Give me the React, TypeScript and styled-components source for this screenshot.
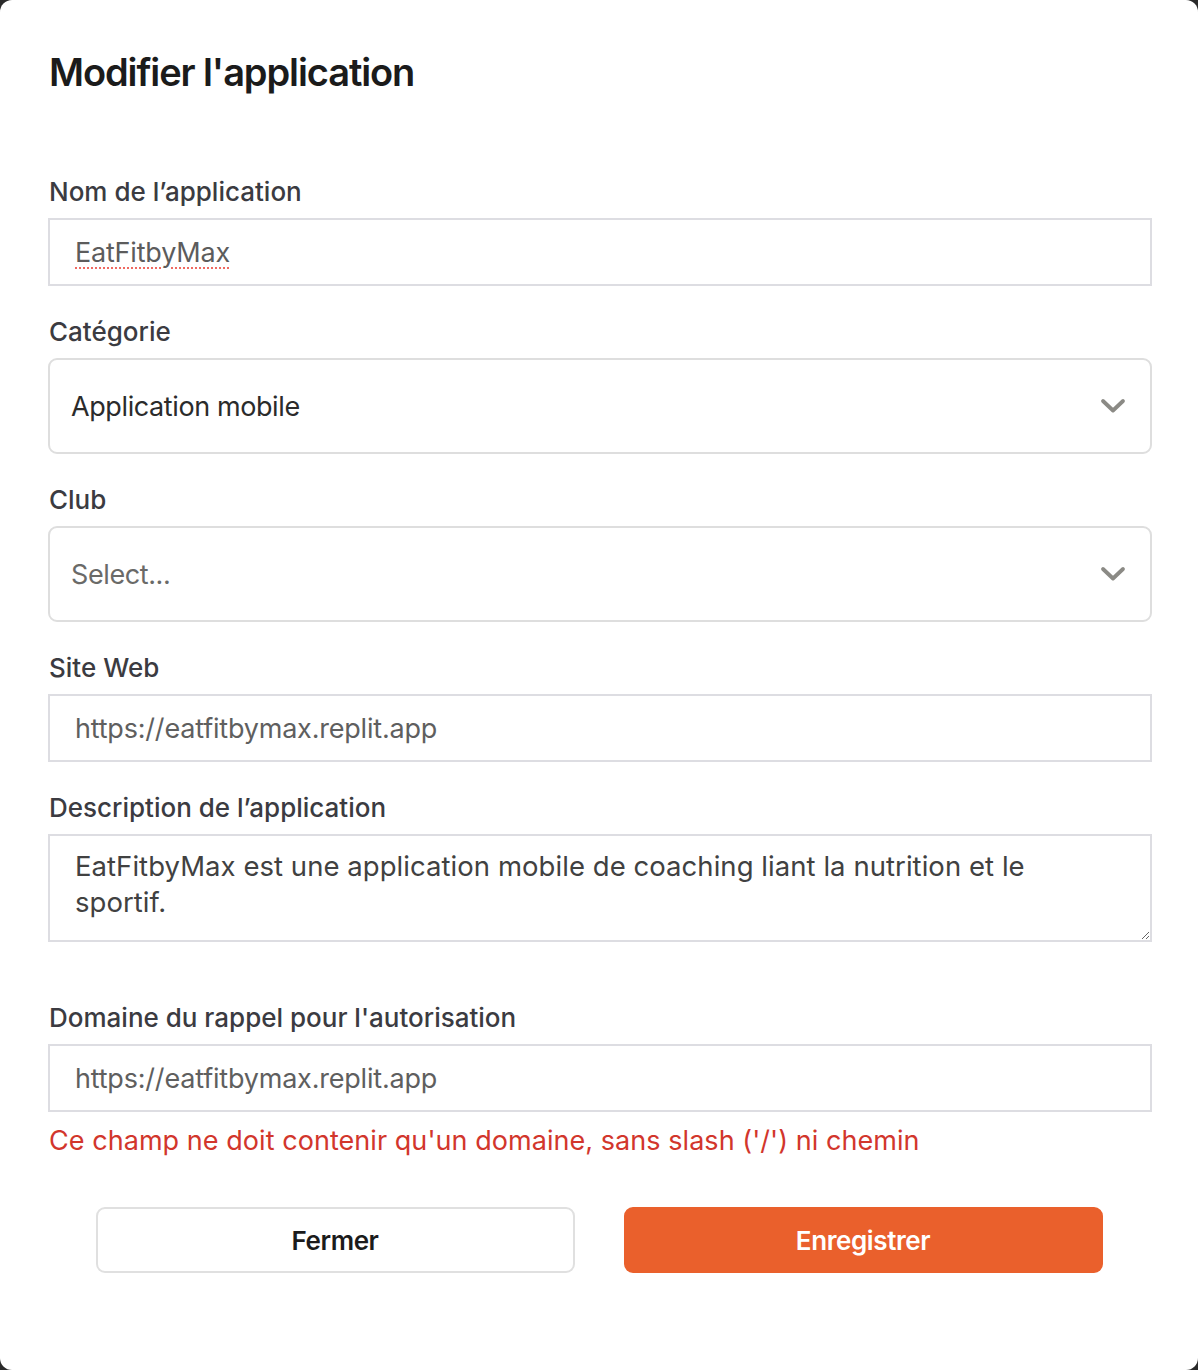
import React from "react";
import styled, { createGlobalStyle } from "styled-components";

const GlobalStyle = createGlobalStyle`
  html, body {
    margin: 0;
    padding: 0;
    background: #2a2a2a;
  }
  * { box-sizing: border-box; }
`;

const FONT = `"Inter", "Liberation Sans", Arial, sans-serif`;

const Modal = styled.div`
  width: 1198px;
  height: 1370px;
  background: #ffffff;
  border-radius: 12px;
  padding: 47px 46px 0 48px;
  font-family: ${FONT};
  display: flex;
  flex-direction: column;
`;

const Title = styled.h1`
  margin: 0 0 0 1px;
  font-size: 38px;
  line-height: 50px;
  font-weight: 600;
  color: #1b1b1b;
  letter-spacing: -1.1px;
`;

const Form = styled.form`
  margin-top: 79px;
  display: flex;
  flex-direction: column;
`;

const Field = styled.div<{ $spaced?: boolean }>`
  display: flex;
  flex-direction: column;
  gap: 10px;
  margin-top: ${(p) => (p.$spaced ? "60px" : "30px")};
  &:first-child {
    margin-top: 0;
  }
`;

const Label = styled.label`
  margin-left: 1px;
  font-size: 26px;
  line-height: 32px;
  font-weight: 500;
  color: #3b3b41;
  letter-spacing: 0;
`;

const TextBox = styled.div`
  height: 68px;
  border: 2px solid #dddde2;
  display: flex;
  align-items: center;
  padding: 0 25px;
  font-size: 27px;
  color: #5c5c5c;
  letter-spacing: -0.2px;
`;

const Misspelled = styled.span`
  text-decoration: underline dotted #ef6a62;
  text-decoration-thickness: 2px;
  text-underline-offset: 6px;
`;

const TextInput = styled.input`
  height: 68px;
  border: 2px solid #dddde2;
  border-radius: 0;
  padding: 0 25px;
  font-family: ${FONT};
  font-size: 27px;
  color: #5f5f5f;
  letter-spacing: -0.2px;
  outline: none;
  background: #fff;
`;

const TextArea = styled.textarea`
  height: 108px;
  border: 2px solid #dddde2;
  border-radius: 0;
  padding: 12px 80px 12px 25px;
  font-family: ${FONT};
  font-size: 27.5px;
  line-height: 36px;
  color: #414141;
  letter-spacing: 0.05px;
  outline: none;
  resize: vertical;
  background: #fff;
`;

const SelectBox = styled.div<{ $placeholder?: boolean }>`
  height: 96px;
  border: 2px solid #dedede;
  border-radius: 9px;
  display: flex;
  align-items: center;
  justify-content: space-between;
  padding: 0 24px 0 21px;
  font-size: 27px;
  letter-spacing: -0.4px;
  color: ${(p) => (p.$placeholder ? "#6a6a68" : "#2b2b2b")};
`;

const Error = styled.p`
  margin: 11px 0 0 1px;
  font-size: 27px;
  line-height: 36px;
  color: #d2362c;
  letter-spacing: 0.05px;
`;

const Actions = styled.div`
  margin-top: 48px;
  display: grid;
  grid-template-columns: 479px 479px;
  gap: 49px;
  justify-content: center;
  margin-left: -2px;
`;

const Button = styled.button<{ $primary?: boolean }>`
  height: 66px;
  border-radius: 9px;
  font-family: ${FONT};
  font-size: 26px;
  font-weight: 600;
  letter-spacing: -0.4px;
  cursor: pointer;
  border: 2px solid ${(p) => (p.$primary ? "#ea602c" : "#e0e0e0")};
  background: ${(p) => (p.$primary ? "#ea602c" : "#ffffff")};
  color: ${(p) => (p.$primary ? "#ffffff" : "#1b1b1b")};
`;

const Chevron = () => (
  <svg width="26" height="16" viewBox="0 0 26 16" fill="none">
    <path
      d="M3 3 L13 12.5 L23 3"
      stroke="#8b8a85"
      strokeWidth="3.8"
      strokeLinecap="round"
      strokeLinejoin="round"
    />
  </svg>
);

export default function App() {
  return (
    <>
      <GlobalStyle />
      <Modal>
        <Title>Modifier l'application</Title>
        <Form onSubmit={(e) => e.preventDefault()}>
          <Field>
            <Label>Nom de l’application</Label>
            <TextBox>
              <Misspelled>EatFitbyMax</Misspelled>
            </TextBox>
          </Field>
          <Field>
            <Label>Catégorie</Label>
            <SelectBox>
              <span>Application mobile</span>
              <Chevron />
            </SelectBox>
          </Field>
          <Field>
            <Label>Club</Label>
            <SelectBox $placeholder>
              <span>Select...</span>
              <Chevron />
            </SelectBox>
          </Field>
          <Field>
            <Label>Site Web</Label>
            <TextInput readOnly value="https://eatfitbymax.replit.app" />
          </Field>
          <Field>
            <Label>Description de l’application</Label>
            <TextArea
              readOnly
              spellCheck={false}
              value="EatFitbyMax est une application mobile de coaching liant la nutrition et le sportif."
            />
          </Field>
          <Field $spaced>
            <Label>Domaine du rappel pour l'autorisation</Label>
            <TextInput readOnly value="https://eatfitbymax.replit.app" />
          </Field>
          <Error>Ce champ ne doit contenir qu'un domaine, sans slash ('/') ni chemin</Error>
          <Actions>
            <Button type="button">Fermer</Button>
            <Button type="submit" $primary>
              Enregistrer
            </Button>
          </Actions>
        </Form>
      </Modal>
    </>
  );
}
